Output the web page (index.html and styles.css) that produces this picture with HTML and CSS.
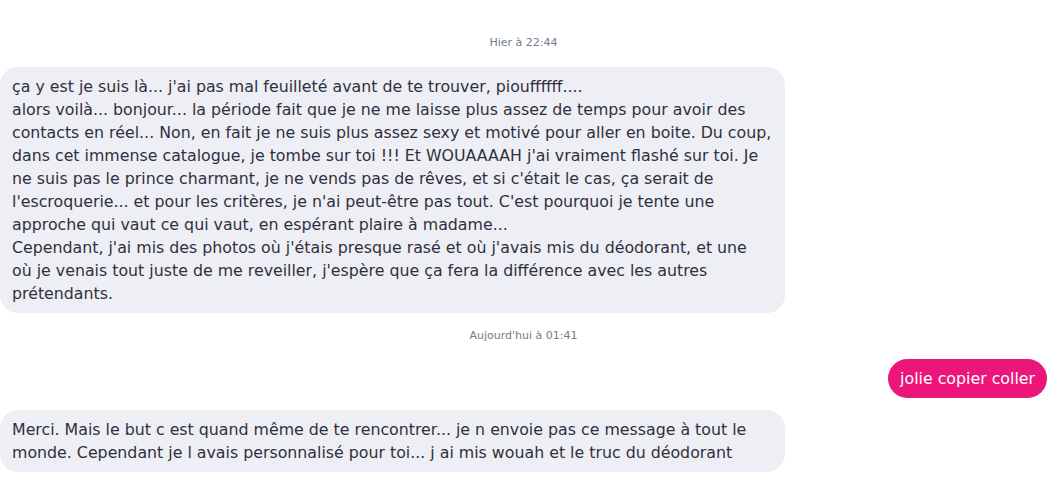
FILE: index.html
```html
<!DOCTYPE html>
<html lang="fr">
<head>
<meta charset="utf-8">
<title>Conversation</title>
<link rel="stylesheet" href="styles.css">
</head>
<body>
<div class="chat">
  <div class="stamp">Hier à 22:44</div>
  <div class="msg in">ça y est je suis là... j'ai pas mal feuilleté avant de te trouver, piouffffff....<br>alors voilà... bonjour... la période fait que je ne me laisse plus assez de temps pour avoir des contacts en réel... Non, en fait je ne suis plus assez sexy et motivé pour aller en boite. Du coup, dans cet immense catalogue, je tombe sur toi !!! Et WOUAAAAH j'ai vraiment flashé sur toi. Je ne suis pas le prince charmant, je ne vends pas de rêves, et si c'était le cas, ça serait de l'escroquerie... et pour les critères, je n'ai peut-être pas tout. C'est pourquoi je tente une approche qui vaut ce qui vaut, en espérant plaire à madame...<br>Cependant, j'ai mis des photos où j'étais presque rasé et où j'avais mis du déodorant, et une où&nbsp;je venais tout juste de me reveiller, j'espère que ça fera la différence avec les autres prétendants.</div>
  <div class="stamp second">Aujourd'hui à 01:41</div>
  <div class="msg out">jolie copier coller</div>
  <div class="msg in last">Merci. Mais le but c est quand même de te rencontrer... je n envoie pas ce message à tout le monde. Cependant je l avais personnalisé pour toi... j ai mis wouah et le truc du déodorant</div>
</div>
</body>
</html>
```
FILE: styles.css
```css
html, body {
  margin: 0;
  padding: 0;
  background: #ffffff;
}
body {
  font-family: "DejaVu Sans", "Open Sans", sans-serif;
}
.chat {
  display: flex;
  flex-direction: column;
  padding: 36px 15px 0 0;
}
.stamp {
  text-align: center;
  font-size: 11px;
  line-height: 14px;
  color: #737c8b;
  margin-bottom: 17px;
}
.stamp.second {
  margin-top: 16px;
  margin-bottom: 16px;
}
.msg {
  font-size: 15.8px;
  line-height: 23px;
  padding: 8px 12px;
  border-radius: 18px;
  box-sizing: border-box;
}
.msg.in {
  align-self: flex-start;
  max-width: 785px;
  background: #eeeff4;
  color: #2e3040;
}
.msg.out {
  align-self: flex-end;
  background: #ec167b;
  color: #ffffff;
  font-weight: 500;
  border-radius: 20px;
}
.msg.last {
  margin-top: 12px;
}
```
